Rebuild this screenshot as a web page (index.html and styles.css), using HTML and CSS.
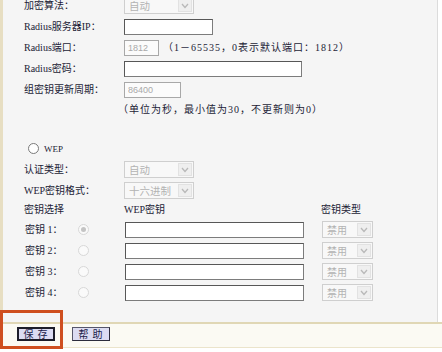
FILE: index.html
```html
<!DOCTYPE html>
<html lang="zh-CN">
<head>
    <meta charset="UTF-8">
    <title>无线安全设置</title>
    <link rel="stylesheet" href="styles.css">
</head>
<body>
    <div class="page">
        <div class="panel">
            <div class="row">
                <span class="label">加密算法：</span>
                <div class="select"><span>自动</span><span class="arrow"><svg width="8" height="6" viewBox="0 0 8 6"><polyline points="1,1 4,4.5 7,1" fill="none" stroke="#b9b9b9" stroke-width="1.3"/></svg></span></div>
            </div>
            <div class="row">
                <span class="label">Radius服务器IP：</span>
                <input class="field w-ip" type="text">
            </div>
            <div class="row">
                <span class="label">Radius端口：</span>
                <input class="field w-port" type="text" value="1812" disabled>
                <span class="note">（1－65535，0表示默认端口：1812）</span>
            </div>
            <div class="row">
                <span class="label">Radius密码：</span>
                <input class="field w-long" type="password">
            </div>
            <div class="row">
                <span class="label">组密钥更新周期：</span>
                <input class="field w-period" type="text" value="86400" disabled>
            </div>
            <div class="row short">
                <span class="label"></span>
                <span class="note hint">（单位为秒，最小值为30，不更新则为0）</span>
            </div>
            <div class="row short"></div>

            <div class="row">
                <span class="radio dark wep-radio"></span>
                <span class="wep-text">WEP</span>
            </div>
            <div class="row">
                <span class="label">认证类型：</span>
                <div class="select"><span>自动</span><span class="arrow"><svg width="8" height="6" viewBox="0 0 8 6"><polyline points="1,1 4,4.5 7,1" fill="none" stroke="#b9b9b9" stroke-width="1.3"/></svg></span></div>
            </div>
            <div class="row">
                <span class="label">WEP密钥格式：</span>
                <div class="select"><span>十六进制</span><span class="arrow"><svg width="8" height="6" viewBox="0 0 8 6"><polyline points="1,1 4,4.5 7,1" fill="none" stroke="#b9b9b9" stroke-width="1.3"/></svg></span></div>
            </div>
            <div class="row head">
                <span class="label">密钥选择</span>
                <span class="col-key">WEP密钥</span>
                <span>密钥类型</span>
            </div>
            <div class="row">
                <span class="key-label">密钥 1：</span>
                <span class="key-radio"><span class="radio on"><span class="dot"></span></span></span>
                <input class="field w-key" type="text">
                <div class="select small"><span>禁用</span><span class="arrow"><svg width="8" height="6" viewBox="0 0 8 6"><polyline points="1,1 4,4.5 7,1" fill="none" stroke="#b9b9b9" stroke-width="1.3"/></svg></span></div>
            </div>
            <div class="row">
                <span class="key-label">密钥 2：</span>
                <span class="key-radio"><span class="radio"></span></span>
                <input class="field w-key" type="text">
                <div class="select small"><span>禁用</span><span class="arrow"><svg width="8" height="6" viewBox="0 0 8 6"><polyline points="1,1 4,4.5 7,1" fill="none" stroke="#b9b9b9" stroke-width="1.3"/></svg></span></div>
            </div>
            <div class="row">
                <span class="key-label">密钥 3：</span>
                <span class="key-radio"><span class="radio"></span></span>
                <input class="field w-key" type="text">
                <div class="select small"><span>禁用</span><span class="arrow"><svg width="8" height="6" viewBox="0 0 8 6"><polyline points="1,1 4,4.5 7,1" fill="none" stroke="#b9b9b9" stroke-width="1.3"/></svg></span></div>
            </div>
            <div class="row">
                <span class="key-label">密钥 4：</span>
                <span class="key-radio"><span class="radio"></span></span>
                <input class="field w-key" type="text">
                <div class="select small"><span>禁用</span><span class="arrow"><svg width="8" height="6" viewBox="0 0 8 6"><polyline points="1,1 4,4.5 7,1" fill="none" stroke="#b9b9b9" stroke-width="1.3"/></svg></span></div>
            </div>
        </div>

        <div class="bar">
            <button class="btn btn-focus">保 存</button>
            <button class="btn">帮 助</button>
        </div>

        <div class="mark"></div>
    </div>
</body>
</html>
```

FILE: styles.css
```css
body {
    margin: 0;
    background-color: #fff;
    font-family: "Liberation Serif", "Noto Sans CJK SC", serif;
    font-size: 10px;
    color: #1c1c36;
}

.page {
    position: relative;
    width: 442px;
    height: 352px;
    overflow: hidden;
}

.panel {
    box-sizing: border-box;
    width: 438px;
    height: 327px;
    margin-top: -5px;
    padding-left: 21px;
    background-color: #f5f5f5;
    border-left: 3px solid #e7dec2;
    border-right: 1px solid #dcdcdc;
}

.row {
    display: flex;
    align-items: center;
    height: 21px;
    line-height: 12px;
    white-space: nowrap;
}

.row.short {
    height: 19px;
}

.row.head {
    height: 18px;
}

.label {
    width: 100px;
    flex-shrink: 0;
}

.note {
    margin-left: 4px;
    letter-spacing: 1px;
}

.note.hint {
    margin-left: -6px;
}

.field {
    box-sizing: border-box;
    height: 16px;
    margin: 0;
    padding: 0 3px;
    border: 1px solid #7c7c7c;
    border-top-color: #575757;
    border-left-color: #575757;
    background-color: #fff;
    font-family: "Liberation Sans", sans-serif;
    font-size: 9px;
    color: #333;
}

.field:disabled {
    border-color: #a8a8a8;
    background-color: #fbfbfb;
    color: #a9a9a9;
}

.w-ip { width: 89px; }
.w-port { width: 35px; }
.w-long { width: 178px; }
.w-period { width: 57px; }
.w-key { width: 179px; margin-right: 18px; }

.select {
    box-sizing: border-box;
    display: flex;
    align-items: center;
    justify-content: space-between;
    width: 70px;
    height: 17px;
    padding-left: 4px;
    border: 1px solid #cfcfcf;
    background-color: #f8f8f8;
    color: #b3b3b3;
    font-family: "Noto Sans CJK SC", sans-serif;
    font-size: 10.5px;
}

.select.small {
    width: 51px;
    font-size: 10px;
}

.arrow {
    box-sizing: border-box;
    display: flex;
    align-items: center;
    justify-content: center;
    width: 14px;
    height: 13px;
    margin-right: 1px;
    border: 1px solid #e2e2e2;
    background-color: #efefef;
}

.radio {
    box-sizing: border-box;
    display: flex;
    align-items: center;
    justify-content: center;
    width: 11px;
    height: 11px;
    border-radius: 50%;
    border: 1px solid #d8d8d8;
    background-color: #fafafa;
}

.radio.dark {
    border-color: #7a7a7a;
    background-color: #fff;
}

.radio .dot {
    width: 5px;
    height: 5px;
    border-radius: 50%;
    background-color: #c4c4c4;
}

.wep-radio {
    margin-left: 4px;
}

.wep-text {
    margin-left: 5px;
    font-size: 9px;
}

.col-key {
    width: 197px;
    flex-shrink: 0;
}

.key-label {
    width: 53px;
    flex-shrink: 0;
    padding-left: 1px;
}

.key-radio {
    width: 47px;
    flex-shrink: 0;
}

.bar {
    display: flex;
    align-items: flex-start;
    gap: 17px;
    height: 26px;
    box-sizing: border-box;
    padding: 3px 0 0 17px;
    background-color: #fbfaf3;
    border-top: 2px solid #e0d7b5;
    border-bottom: 1px solid #ebe4cb;
}

.btn {
    box-sizing: border-box;
    width: 38px;
    height: 14px;
    margin: 0;
    padding: 0;
    border: 1px solid #56566a;
    border-right-color: #2c2c3c;
    border-bottom-color: #2c2c3c;
    background-color: #dcdcf2;
    color: #1b1b4a;
    font-family: "Noto Sans CJK SC", sans-serif;
    font-size: 10px;
    line-height: 12px;
    letter-spacing: 1px;
}

.btn-focus {
    border: 2px solid #1d1d2a;
    line-height: 10px;
}

.mark {
    position: absolute;
    left: 0;
    top: 310px;
    width: 63px;
    height: 39px;
    box-sizing: border-box;
    border: 3px solid #cf4f1f;
}
```
